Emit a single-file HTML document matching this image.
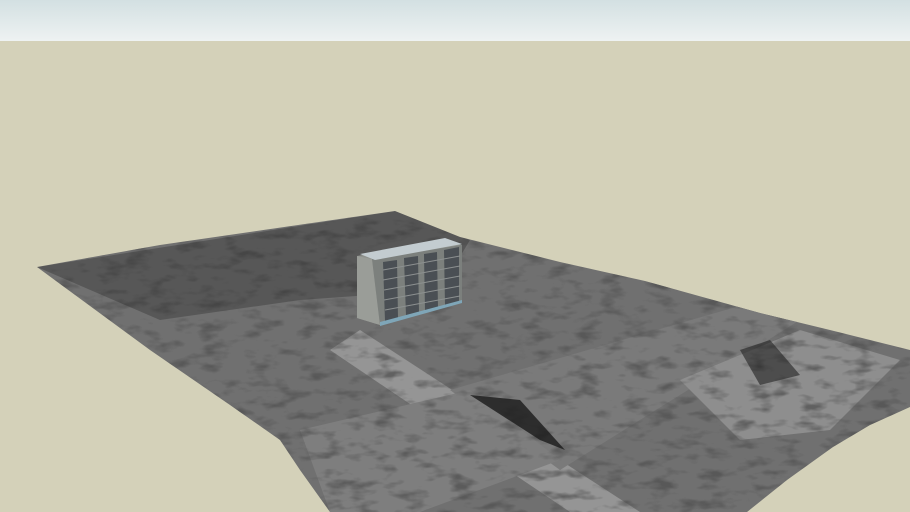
<!DOCTYPE html>
<html><head><meta charset="utf-8"><style>html,body{margin:0;padding:0;width:910px;height:512px;overflow:hidden;background:#d4d1b9}</style></head>
<body>
<svg width="910" height="512" viewBox="0 0 910 512" xmlns="http://www.w3.org/2000/svg">
<defs>
<linearGradient id="sky" x1="0" y1="0" x2="0" y2="1"><stop offset="0" stop-color="#d3e0e2"/><stop offset="1" stop-color="#eef2f2"/></linearGradient>
<clipPath id="t"><path d="M37,267 L160,245 L395,211 L460,237 L560,262 L645,281 L760,313 L830,330 L910,350 L910,407 L870,425 L833,447 L787,480 L747,512 L330,512 L300,470 L280,440 L230,405 L150,350 Z"/></clipPath>
<filter id="n" x="0" y="0" width="100%" height="100%"><feTurbulence type="fractalNoise" baseFrequency="0.04 0.1" numOctaves="3" seed="7"/><feColorMatrix type="matrix" values="0 0 0 0 0.08 0 0 0 0 0.08 0 0 0 0 0.08 0 0 0 -3 1.5"/></filter>
</defs>
<rect width="910" height="41" fill="url(#sky)"/>
<rect y="41" width="910" height="471" fill="#d4d1b9"/>
<g clip-path="url(#t)">
<rect width="910" height="512" fill="#707070"/>
<path d="M360,330 L640,512 L570,512 L330,350 Z" fill="#959595"/>
<path d="M450,390 L760,300 L800,320 L560,470 Z" fill="#7a7a7a"/>
<path d="M300,430 L470,390 L560,460 L420,512 L330,512 Z" fill="#7e7e7e"/>
<path d="M680,380 L800,330 L900,360 L830,430 L740,440 Z" fill="#8e8e8e"/>
<rect width="910" height="512" filter="url(#n)" opacity="0.75"/>
<path d="M37,267 L395,211 L470,240 L440,290 L300,300 L160,320 Z" fill="#1e1e1e" opacity="0.3"/>
<path d="M470,395 L520,400 L565,450 L540,440 Z" fill="#1a1a1a" opacity="0.8"/>
<path d="M740,350 L770,340 L800,375 L760,385 Z" fill="#222" opacity="0.6"/>
</g>
<g>
<path d="M357,256 L445,240 L462,245 L462,302 L380,325 L357,318 Z" fill="#8e918c"/>
<path d="M357,256 L372,259 L380,325 L357,318 Z" fill="#9a9d98"/>
<path d="M372,259 L462,245 L462,302 L380,325 Z" fill="#7c807d"/>
<path d="M360,254 L445,238 L462,244 L375,260 Z" fill="#c3ccd0"/>
<g fill="#4a4f54">
<path d="M383,262 L397,260 L398,318 L385,321 Z"/>
<path d="M404,258 L418,256 L419,312 L406,316 Z"/>
<path d="M424,254 L437,252 L438,307 L425,311 Z"/>
<path d="M444,250 L459,247 L459,302 L445,305 Z"/>
</g>
<g stroke="#8c9090" stroke-width="1">
<line x1="383" y1="270" x2="460" y2="256"/><line x1="383" y1="280" x2="460" y2="266"/>
<line x1="384" y1="290" x2="460" y2="276"/><line x1="384" y1="300" x2="460" y2="286"/>
<line x1="385" y1="310" x2="460" y2="296"/>
</g>
<path d="M380,322 L462,300 L462,303 L380,326 Z" fill="#7fa6b8"/>
</g>
</svg>
</body></html>
